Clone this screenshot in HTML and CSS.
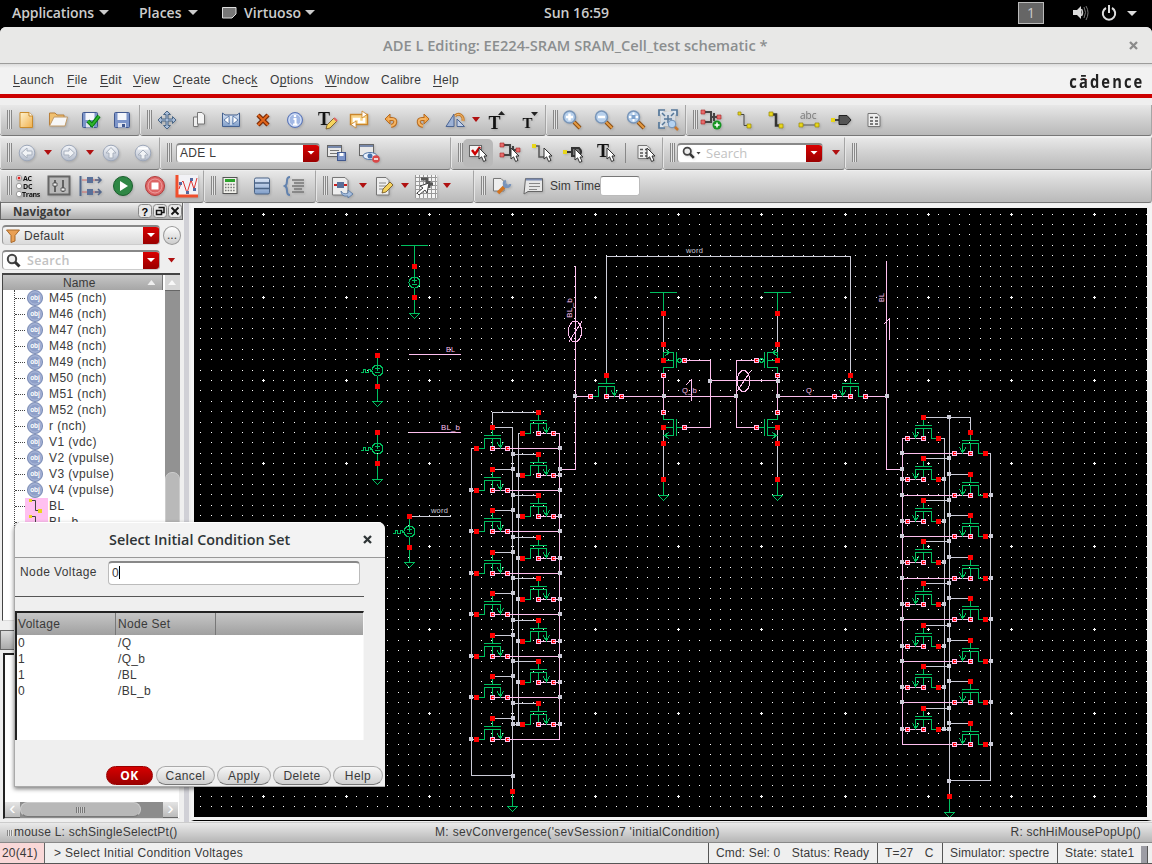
FILE: index.html
```html
<!DOCTYPE html>
<html lang="en">
<head>
<meta charset="utf-8">
<title>ADE L Editing: EE224-SRAM SRAM_Cell_test schematic</title>
<link rel="stylesheet" href="styles.css">
</head>
<body>
<svg class="defs" width="0" height="0">
  <defs>
    <linearGradient id="gr" x1="0" y1="0" x2="0" y2="1"><stop offset="0" stop-color="#f5f7fb"/><stop offset="1" stop-color="#b4bccb"/></linearGradient>
    <linearGradient id="gy" x1="0" y1="0" x2="1" y2="1"><stop offset="0" stop-color="#fff3d0"/><stop offset="1" stop-color="#f0b04c"/></linearGradient>
    <linearGradient id="gb" x1="0" y1="0" x2="0" y2="1"><stop offset="0" stop-color="#dfe9f8"/><stop offset="1" stop-color="#7f9dc8"/></linearGradient>
    <symbol id="cur" viewBox="0 0 10 15" overflow="visible"><path d="M1 0V11L3.600 8.800L5.600 13.500L8 12.400L6 8H9Z" fill="#fff" stroke="#333" stroke-width="1"/></symbol>
    <symbol id="new" viewBox="-16 -12 32 24"><path d="M-6 -7.500H3L6.500 -4V7.500H-6Z" fill="url(#gy)" stroke="#c98b2c"/><path d="M3 -7.500V-4H6.500" fill="#fff" stroke="#c98b2c"/></symbol>
    <symbol id="open" viewBox="-16 -12 32 24"><path d="M-8.500 5V-7H-3L-1 -5H6V-2" fill="#f0c070" stroke="#b9803a"/><path d="M-8.500 6L-4 -3H9.500L7 6Z" fill="#f7f7f7" stroke="#c09a68"/></symbol>
    <symbol id="save" viewBox="-16 -12 32 24"><rect x="-7.500" y="-7.500" width="15" height="15" rx="1" fill="#7d95c9" stroke="#42598f"/><rect x="-4.500" y="-7" width="9" height="7" fill="#f4f6fb"/><rect x="-4" y="3" width="8" height="4.500" fill="#dfe3ee"/><rect x="0" y="4" width="3" height="3" fill="#42598f"/></symbol>
    <symbol id="savec" viewBox="-16 -12 32 24"><use href="#save" x="-16" y="-12" width="32" height="24"/><path d="M-2 1L2 5L9 -4" fill="none" stroke="#087a12" stroke-width="4"/><path d="M-2 1L2 5L9 -4" fill="none" stroke="#2db52c" stroke-width="2"/></symbol>
    <symbol id="move" viewBox="-16 -12 32 24"><path d="M0 -9L3.500 -5.500H1V-1H5.500V-3.500L9 0L5.500 3.500V1H1V5.500H3.500L0 9L-3.500 5.500H-1V1H-5.500V3.500L-9 0L-5.500 -3.500V-1H-1V-5.500H-3.500Z" fill="#a9bdd8" stroke="#4c6887"/></symbol>
    <symbol id="copy" viewBox="-16 -12 32 24"><path d="M-5.500 -3H-1V6.500H-5.500Z" fill="#eee" stroke="#777"/><path d="M-1.500 -7.500H3L5.500 -5V4H-1.500Z" fill="#f4f4f4" stroke="#777"/></symbol>
    <symbol id="str" viewBox="-16 -12 32 24"><path d="M-8.500 -7V6.500H8.500V-7L6 -5H-6Z" fill="url(#gb)" stroke="#44618f"/><path d="M-7 0L-2 -4V4ZM7 0L2 -4V4Z" fill="#fff" stroke="#3b5f95" stroke-width=".7"/><path d="M0 -4V5" stroke="#fff"/></symbol>
    <symbol id="del" viewBox="-16 -12 32 24"><path d="M-5 -5L5 5M5 -5L-5 5" stroke="#7b2a06" stroke-width="4.500"/><path d="M-5 -5L5 5M5 -5L-5 5" stroke="#e2661c" stroke-width="2"/></symbol>
    <symbol id="info" viewBox="-16 -12 32 24"><circle r="7.500" fill="#a2b8e4" stroke="#5a74b5"/><circle r="6" fill="none" stroke="#dce6fa"/><path d="M-1.500 -1H.5V4M-2 4.500H2.500" fill="none" stroke="#fff" stroke-width="2"/><circle cy="-4" r="1.300" fill="#fff"/></symbol>
    <symbol id="tp" viewBox="-16 -12 32 24"><text x="-9" y="5" class="bigt">T</text><path d="M-1 9L0 5L7 -2L10 1L3 8Z" fill="#f5d35e" stroke="#6b4c18" stroke-width=".8"/><path d="M7 -2L10 1" stroke="#d66" stroke-width="2"/></symbol>
    <symbol id="rot" viewBox="-16 -12 32 24"><rect x="-8.500" y="-5.500" width="17" height="10" fill="#f9d489" stroke="#c9852b" stroke-width="1.400"/><path d="M-5 2V-1H0V2H5V-2" fill="none" stroke="#fff" stroke-width="2.500"/><path d="M3 -9L8 -5.500L3 -2ZM-3 8L-8 4.500L-3 1Z" fill="#fff" stroke="#c9852b" stroke-width=".8"/></symbol>
    <symbol id="undo" viewBox="-16 -12 32 24"><path d="M-3 -1H1C6 -1 5 5 0 6" fill="none" stroke="#b66b20" stroke-width="4"/><path d="M-6 -1L-1 -6V4Z" fill="#f2a64b" stroke="#b66b20"/><path d="M-3 -1H1C6 -1 5 5 0 6" fill="none" stroke="#f5b463" stroke-width="2"/></symbol>
    <symbol id="redo" viewBox="-16 -12 32 24"><g transform="scale(-1 1)"><path d="M-3 -1H1C6 -1 5 5 0 6" fill="none" stroke="#b66b20" stroke-width="4"/><path d="M-6 -1L-1 -6V4Z" fill="#f2a64b" stroke="#b66b20"/><path d="M-3 -1H1C6 -1 5 5 0 6" fill="none" stroke="#f5b463" stroke-width="2"/></g></symbol>
    <symbol id="flip" viewBox="-16 -12 32 24"><path d="M-9 6.500H-1V-6Z" fill="#9db2d6" stroke="#4c6593"/><path d="M2 6.500H9.500L2 -1Z" fill="#c2d0e8" stroke="#4c6593"/><path d="M0 -4C4 -8 9 -4 8 1" fill="none" stroke="#c47a28" stroke-width="3"/><path d="M0 -4C4 -8 9 -4 8 1" fill="none" stroke="#f6c07a"/></symbol>
    <symbol id="tu" viewBox="-16 -12 32 24"><text x="-8.500" y="9" class="bigt">T</text><path d="M1 -5H8L4.500 -9Z" fill="#222"/></symbol>
    <symbol id="td" viewBox="-16 -12 32 24"><text x="-6.500" y="8" class="midt">T</text><path d="M2 -8H9L5.500 -4Z" fill="#222"/></symbol>
    <symbol id="mag" viewBox="-16 -12 32 24"><path d="M2 2L8 8" stroke="#8a4d12" stroke-width="4"/><path d="M2 2L8 8" stroke="#e59b44" stroke-width="2"/><circle cx="-2.500" cy="-3" r="6" fill="#b7d0ec" stroke="#7895b8" stroke-width="1.500"/></symbol>
    <symbol id="zin" viewBox="-16 -12 32 24"><use href="#mag" x="-16" y="-12" width="32" height="24"/><path d="M-6 -3H1M-2.500 -6.500V.5" stroke="#fff" stroke-width="2.500"/></symbol>
    <symbol id="zout" viewBox="-16 -12 32 24"><use href="#mag" x="-16" y="-12" width="32" height="24"/><path d="M-6 -3H1" stroke="#fff" stroke-width="2.500"/></symbol>
    <symbol id="zfit" viewBox="-16 -12 32 24"><use href="#mag" x="-16" y="-12" width="32" height="24"/><path d="M-7 -3H2M-2.500 -7.500V1.500" stroke="#fff" stroke-width="2"/><rect x="-4.500" y="-5" width="4" height="4" fill="#7ea2cc"/></symbol>
    <symbol id="zsel" viewBox="-16 -12 32 24"><path d="M-9 -4V-10H-3M3 -10H9V-4M-9 2V8H-3" fill="#dfe8f2" stroke="#557799" stroke-width="1.700"/><rect x="-7" y="-8" width="14" height="14" fill="#dfe8f2" opacity=".7"/><path d="M-6 -7L-3 -4M6 -7L3 -4M-6 5L-3 2M0 -5V3M-4 -1H4" stroke="#557799" stroke-width="1.500"/><path d="M6 6L10 10" stroke="#c8752a" stroke-width="2.500"/><circle cx="4" cy="4" r="3.800" fill="#b5d2f0" stroke="#6d8eb4"/></symbol>
    <symbol id="fet" viewBox="-16 -12 32 24"><path d="M-7 -8H0V2H-7M0 -3H9M3 -7V1" fill="none" stroke="#444" stroke-width="2"/><path d="M-10 -10h4v4h-4zM-10 0h4v4h-4zM6 -5h4v4h-4z" fill="#e66b6b" stroke="#a22" stroke-width=".6"/></symbol>
    <symbol id="addi" viewBox="-16 -12 32 24"><use href="#fet" x="-16" y="-12" width="32" height="24"/><circle cx="6" cy="5" r="4.500" fill="#159522"/><path d="M3.500 5H8.500M6 2.500V7.500" stroke="#fff" stroke-width="1.500"/></symbol>
    <symbol id="wire" viewBox="-16 -12 32 24"><path d="M-4 -5.500H0V5.500H4" fill="none" stroke="#444"/><path d="M-6 -8h3v3h-3zM3 4h4v4h-4z" fill="#e8d61b" stroke="#998b08" stroke-width=".7"/></symbol>
    <symbol id="wwire" viewBox="-16 -12 32 24"><path d="M-4 -5.500H0V5.500H4" fill="none" stroke="#333" stroke-width="2.500"/><path d="M-7 -8h4v4h-4zM3 4h4v4h-4z" fill="#e8d61b" stroke="#998b08" stroke-width=".7"/></symbol>
    <symbol id="abc" viewBox="-16 -12 32 24"><text x="-9" y="-1" class="abct">abc</text><path d="M-8 5H8" stroke="#555"/><path d="M-10 3h4v4h-4zM6 3h4v4h-4z" fill="#e8d61b" stroke="#998b08" stroke-width=".7"/></symbol>
    <symbol id="pin" viewBox="-16 -12 32 24"><path d="M-8 0H-2" stroke="#444" stroke-width="2"/><rect x="-10" y="-2" width="4" height="4" fill="#e8d61b"/><path d="M-2 -4.500H6L10 0L6 4.500H-2Z" fill="#555" stroke="#222"/></symbol>
    <symbol id="form" viewBox="-16 -12 32 24"><path d="M-6 -6.500H3L6 -3.500V6.500H-6Z" fill="#eee" stroke="#777"/><path d="M-4 -2.500H-1M1 -2.500H4M-4 1H-1M1 1H4M-4 4H-1M1 4H4" stroke="#555" stroke-width="1.700"/></symbol>
    <symbol id="left" viewBox="-16 -12 32 24"><circle r="7.800" fill="url(#gr)" stroke="#9ca6b8"/><path d="M-5.500 0L0 -5V-2H5V2H0V5Z" fill="#f1f3f6" stroke="#a8b0bd"/></symbol>
    <symbol id="right" viewBox="-16 -12 32 24"><circle r="7.800" fill="url(#gr)" stroke="#9ca6b8"/><path d="M5.500 0L0 -5V-2H-5V2H0V5Z" fill="#f1f3f6" stroke="#a8b0bd"/></symbol>
    <symbol id="up" viewBox="-16 -12 32 24"><circle r="7.800" fill="url(#gr)" stroke="#9ca6b8"/><path d="M0 -5.500L-5 0H-2V5H2V0H5Z" fill="#f1f3f6" stroke="#a8b0bd"/></symbol>
    <symbol id="top" viewBox="-16 -12 32 24"><circle r="7.800" fill="url(#gr)" stroke="#9ca6b8"/><path d="M-5 -4.500H5" stroke="#fff" stroke-width="2"/><path d="M0 -3L-5 2H-2V6H2V2H5Z" fill="#f1f3f6" stroke="#a8b0bd"/></symbol>
    <symbol id="vsave" viewBox="-16 -12 32 24"><rect x="-9.500" y="-7.500" width="14" height="11" fill="#e8e8e8" stroke="#666"/><path d="M-9 -6H4" stroke="#7788aa" stroke-width="2"/><path d="M-7 -2.500H2M-7 .5H0" stroke="#777"/><rect x="0.500" y="-.5" width="8" height="8" fill="#7d95c9" stroke="#42598f"/><rect x="2.500" y="0" width="4" height="3" fill="#fff"/></symbol>
    <symbol id="veye" viewBox="-16 -12 32 24"><rect x="-9.500" y="-8.500" width="14" height="11" fill="#e8e8e8" stroke="#666"/><path d="M-9 -7H4" stroke="#7788aa" stroke-width="2"/><ellipse cx="1" cy="3" rx="7" ry="3.500" fill="#e8f0fb" stroke="#5478a8"/><circle cx="1" cy="3" r="2.500" fill="#4470ac"/><circle cx="7" cy="6" r="3.800" fill="#d94848"/><path d="M5 6H9" stroke="#fff" stroke-width="1.500"/></symbol>
    <symbol id="selc" viewBox="-16 -12 32 24"><rect x="-8.500" y="-7.500" width="12" height="11" fill="#f4f4f4" stroke="#666"/><path d="M-6 -3L-3 1L2 -6" fill="none" stroke="#c00" stroke-width="2.500"/><use href="#cur" x="0" y="-5" width="10" height="15"/></symbol>
    <symbol id="seli" viewBox="-16 -12 32 24"><use href="#fet" x="-16" y="-12" width="32" height="24"/><use href="#cur" x="0" y="-5" width="10" height="15"/></symbol>
    <symbol id="selw" viewBox="-16 -12 32 24"><path d="M-6 -7H-3V4H2" fill="none" stroke="#555" stroke-width="1.500"/><path d="M-10 -9h4v4h-4z" fill="#e8d61b"/><use href="#cur" x="1" y="-5" width="10" height="15"/></symbol>
    <symbol id="selp" viewBox="-16 -12 32 24"><path d="M-8 -1H-2M-2 -5H5Q9 -1 5 3H-2Z" fill="#777" stroke="#333" stroke-width="2"/><path d="M-11 -3h4v4h-4z" fill="#e8d61b"/><use href="#cur" x="0" y="-4" width="10" height="15"/></symbol>
    <symbol id="selt" viewBox="-16 -12 32 24"><text x="-9" y="4" class="bigt">T</text><use href="#cur" x="0" y="-5" width="10" height="15"/></symbol>
    <symbol id="self" viewBox="-16 -12 32 24"><g transform="translate(-2 -1)"><use href="#form" x="-16" y="-12" width="32" height="24"/></g><use href="#cur" x="0" y="-5" width="10" height="15"/></symbol>
    <symbol id="acdc" viewBox="-16 -12 32 24"><circle cx="-8" cy="-8" r="2.700" fill="#fff" stroke="#999"/><circle cx="-8" cy="-8" r="1.500" fill="#d22"/><circle cx="-8" cy="0" r="2.700" fill="#fff" stroke="#999"/><circle cx="-8" cy="8" r="2.700" fill="#fff" stroke="#999"/><text x="-4" y="-5" class="act">AC</text><text x="-4" y="3" class="act">DC</text><text x="-5" y="11" class="act">Trans</text></symbol>
    <symbol id="sld" viewBox="-16 -12 32 24"><rect x="-10.500" y="-9.500" width="21" height="18" fill="#b9b9b9" stroke="#666" stroke-width="2"/><path d="M-4 -6V6M4 -6V6" stroke="#444" stroke-width="1.500"/><path d="M-6 -3h4v3h-4zM2 2h4v3h-4z" fill="#eee" stroke="#444" stroke-width=".8"/></symbol>
    <symbol id="sigs" viewBox="-16 -12 32 24"><path d="M-10.500 -10V10" stroke="#53688c" stroke-width="2"/><path d="M-9 -6H10M-9 6H10" stroke="#c66" stroke-width="1"/><path d="M-4 -9h6v6h-6zM-4 3h6v6h-6z" fill="#5a7099"/><path d="M4 -6H10M7 -9L10 -6L7 -3M4 6H10M7 3L10 6L7 9" fill="none" stroke="#53688c" stroke-width="1.500"/></symbol>
    <symbol id="run" viewBox="-16 -12 32 24"><circle r="9.500" fill="#2f8745" stroke="#1b5e2e"/><path d="M-3 -5L5 0L-3 5Z" fill="#fff"/></symbol>
    <symbol id="stop" viewBox="-16 -12 32 24"><circle r="9.500" fill="#dd6464" stroke="#b03a3a"/><circle r="7" fill="none" stroke="#eea0a0"/><rect x="-3.500" y="-3.500" width="7" height="7" fill="#fff"/></symbol>
    <symbol id="plot" viewBox="-16 -12 32 24"><rect x="-11" y="-11" width="22" height="22" fill="#f2f2f6"/><path d="M-10 -11V10H11" fill="none" stroke="#f04e2c" stroke-width="3"/><path d="M-8 3L-6 -3L-4 -5L0 7L4 -6L7 3L10 -8" fill="none" stroke="#d33"/><path d="M-8 -4h3v3h-3zM-1 5h3v3h-3zM3 -8h3v3h-3zM6 2h3v3h-3z" fill="#5468a0"/></symbol>
    <symbol id="calc" viewBox="-16 -12 32 24"><rect x="-7" y="-8.500" width="14" height="16" fill="#f0f0ea" stroke="#555"/><rect x="-5" y="-7" width="10" height="3" fill="#2ca32c"/><path d="M-5 -1.500H5M-5 1.500H5M-5 4.500H5" stroke="#777" stroke-width="1.400" stroke-dasharray="1.500 1.200"/></symbol>
    <symbol id="db" viewBox="-16 -12 32 24"><rect x="-7.500" y="-8" width="15" height="16" rx="1.500" fill="url(#gb)" stroke="#4a6385"/><path d="M-7 -3H7M-7 2.500H7" stroke="#4a6385" stroke-width="1.500"/></symbol>
    <symbol id="brace" viewBox="-16 -12 32 24"><path d="M-4 -9Q-7 -9 -7 -5T-9 0Q-7 1 -7 5T-4 9" fill="none" stroke="#6282ae" stroke-width="2"/><path d="M-2 -6H10M0 -3H10M-2 0H10M0 3H8M-2 6H10" stroke="#777" stroke-width="1.500"/></symbol>
    <symbol id="chk" viewBox="-16 -12 32 24"><path d="M-9.500 -8.500H3L6 -5.500V9H-9.500Z" fill="#eee" stroke="#777"/><path d="M-8 -1H5" stroke="#c22" stroke-width="2"/><rect x="-5" y="-4" width="7" height="6" fill="#5a7099"/><path d="M-1 5Q1 9 6 7V4L11 8L6 12V10Q-1 11 -1 5Z" fill="#a6bede" stroke="#55739d" stroke-width=".8"/></symbol>
    <symbol id="pen" viewBox="-16 -12 32 24"><path d="M-7.500 -8.500H2L5 -5.500V9H-7.500Z" fill="#eee" stroke="#777"/><path d="M-5 -3H2M-5 0H2M-5 3H0" stroke="#888"/><path d="M-2 7L-1 3L6 -4L9 -1L2 6Z" fill="#f5d35e" stroke="#6b4c18" stroke-width=".8"/></symbol>
    <symbol id="grid" viewBox="-16 -12 32 24"><rect x="-11" y="-11" width="22" height="23" fill="#f5f5f5"/><path d="M-10.500 -11V12M-6.500 -11V12M-2.500 -11V12M1.500 -11V12M5.500 -11V12M9.500 -11V12M-11 -8.500H11M-11 -4.500H11M-11 -.5H11M-11 3.500H11M-11 7.500H11" stroke="#999" stroke-width="1"/><path d="M-5 -7H1V-2H7M3 -5V2" fill="none" stroke="#555" stroke-width="3"/><path d="M3 -3L1 7L-1 4L-7 9L-9 7L-3 2L-6 0Z" fill="#fff" stroke="#444"/></symbol>
    <symbol id="wr" viewBox="-16 -12 32 24"><path d="M-7.500 -7.500H0L3 -4.500V5H-7.500Z" fill="#eee" stroke="#777"/><path d="M-3 7L4 0" stroke="#d27320" stroke-width="3.500"/><path d="M3 1L6 -2" stroke="#7894bc" stroke-width="3"/><path d="M9 -2A3 3 0 1 1 5 -5" fill="none" stroke="#7894bc" stroke-width="2.500"/></symbol>
    <symbol id="note" viewBox="-16 -12 32 24"><path d="M-7.500 -7.500H9.500V5.500H-5L-9 8Z" fill="#e7e7e7" stroke="#666"/><path d="M-7 -6.500H9" stroke="#7b8bb0" stroke-width="2"/><path d="M-4 -2.500H7M-4 .5H7M-4 3.500H4" stroke="#888"/></symbol>
    <symbol id="obj" viewBox="0 0 16 16"><circle cx="8" cy="8" r="7.600" fill="#8e9fc8" stroke="#7183ae" stroke-width=".8"/><circle cx="8" cy="8" r="6.200" fill="none" stroke="#b6c2de" stroke-width=".8"/><text x="8" y="10.300" text-anchor="middle" class="objt">obj</text></symbol>
    <symbol id="look" viewBox="0 0 16 16"><circle cx="6" cy="6" r="4.200" fill="#eee" stroke="#444" stroke-width="2"/><path d="M9 9L13.500 13.500" stroke="#333" stroke-width="3"/></symbol>
  </defs>
</svg>

<header class="topbar">
  <span class="tb apps">Applications</span><i class="tri"></i>
  <span class="tb places">Places</span><i class="tri"></i>
  <svg class="appicon" width="15" height="12"><path d="M.5 .5H14V7L10 11H.5Z" fill="#777" stroke="#ddd"/></svg>
  <span class="tb virt">Virtuoso</span><i class="tri"></i>
  <span class="clock">Sun 16:59</span>
  <span class="ws">1</span>
  <svg class="tray" width="64" height="18" viewBox="0 0 64 18"><path d="M0 6H4L8 2V15L4 11H0Z" fill="#ddd"/><path d="M8.500 5Q10.500 8.500 8.500 12" fill="none" stroke="#ccc" stroke-width="1.500"/><path d="M11 3Q14 8.500 11 14M13 2Q17 8.500 13 16" fill="none" stroke="#777"/><path d="M33 4A6.200 6.200 0 1 0 39 4" fill="none" stroke="#ddd" stroke-width="2"/><path d="M36 1V9" stroke="#ddd" stroke-width="2"/><path d="M54 7H64L59 12Z" fill="#ddd"/></svg>
</header>

<main class="win">
  <div class="title"><span>ADE L Editing: EE224-SRAM SRAM_Cell_test schematic *</span><svg class="tclose" width="9" height="9"><path d="M1 1L8 8M8 1L1 8" stroke="#8b8b8b" stroke-width="2.300"/></svg></div>
  <nav class="menu">
    <span><u>L</u>aunch</span><span><u>F</u>ile</span><span><u>E</u>dit</span><span><u>V</u>iew</span><span><u>C</u>reate</span><span>Chec<u>k</u></span><span>O<u>p</u>tions</span><span><u>W</u>indow</span><span>Calibre</span><span><u>H</u>elp</span>
    <b class="brand">c<span>ā</span>dence</b>
  </nav>

  <div class="bar r1">
    <section class="seg" id="s11"><i class="grip"></i><svg><use href="#new"/></svg><svg><use href="#open"/></svg><svg><use href="#savec"/></svg><svg><use href="#save"/></svg></section>
    <section class="seg" id="s12"><i class="grip"></i><svg><use href="#move"/></svg><svg><use href="#copy"/></svg><svg><use href="#str"/></svg><svg><use href="#del"/></svg><svg><use href="#info"/></svg><svg><use href="#tp"/></svg><svg><use href="#rot"/></svg><svg><use href="#undo"/></svg><svg><use href="#redo"/></svg><svg><use href="#flip"/></svg><i class="dd"></i><svg><use href="#tu"/></svg><svg><use href="#td"/></svg></section>
    <section class="seg" id="s13"><i class="grip"></i><svg><use href="#zin"/></svg><svg><use href="#zout"/></svg><svg><use href="#zfit"/></svg><svg><use href="#zsel"/></svg></section>
    <section class="seg wide" id="s14"><i class="grip"></i><svg><use href="#addi"/></svg><svg><use href="#wire"/></svg><svg><use href="#wwire"/></svg><svg><use href="#abc"/></svg><svg><use href="#pin"/></svg><svg><use href="#form"/></svg></section>
  </div>
  <div class="bar r2">
    <section class="seg" id="s21"><i class="grip"></i><svg><use href="#left"/></svg><i class="dd"></i><svg><use href="#right"/></svg><i class="dd"></i><svg><use href="#up"/></svg><svg><use href="#top"/></svg></section>
    <section class="seg" id="s22"><i class="grip"></i><div class="combo ade"><span>ADE L</span><b></b></div><svg><use href="#vsave"/></svg><svg><use href="#veye"/></svg></section>
    <section class="seg" id="s23"><i class="grip"></i><div class="pressed"><svg><use href="#selc"/></svg></div><svg><use href="#seli"/></svg><svg><use href="#selw"/></svg><svg><use href="#selp"/></svg><svg><use href="#selt"/></svg><i class="vline"></i><svg><use href="#self"/></svg></section>
    <section class="seg" id="s24"><i class="grip"></i><div class="combo find"><svg class="lk"><use href="#look"/></svg><i class="mini"></i><em>Search</em><b></b></div><i class="dd"></i></section>
    <section class="seg wide" id="s25"><i class="grip"></i></section>
  </div>
  <div class="bar r3">
    <section class="seg" id="s31"><i class="grip"></i><svg><use href="#acdc"/></svg><svg><use href="#sld"/></svg><svg><use href="#sigs"/></svg><svg><use href="#run"/></svg><svg><use href="#stop"/></svg><svg><use href="#plot"/></svg></section>
    <section class="seg" id="s32"><i class="grip"></i><svg><use href="#calc"/></svg><svg><use href="#db"/></svg><svg><use href="#brace"/></svg></section>
    <section class="seg" id="s33"><i class="grip"></i><svg><use href="#chk"/></svg><i class="dd"></i><svg><use href="#pen"/></svg><i class="dd"></i><svg><use href="#grid"/></svg><i class="dd"></i></section>
    <section class="seg wide" id="s34"><i class="grip"></i><svg><use href="#wr"/></svg><svg><use href="#note"/></svg><span class="simt">Sim Time</span><div class="siminput"></div></section>
  </div>

  <div class="work">
    <aside class="side">
      <div class="navh"><b>Navigator</b>
        <svg width="46" height="16" viewBox="0 0 46 16"><g fill="#e8e8e8" stroke="#888"><rect x=".5" y="1.500" width="13" height="13" rx="3"/><rect x="15.500" y="1.500" width="13" height="13" rx="3"/><rect x="30.500" y="1.500" width="13" height="13" rx="3"/></g><text x="3.500" y="12.500" class="qm">?</text><path d="M20.500 4.500H26V9.500H24M18.500 7.500H23.500V11.500H18.500Z" fill="none" stroke="#111" stroke-width="1.500"/><path d="M33.500 4.500L40.500 11.500M40.500 4.500L33.500 11.500" stroke="#111" stroke-width="1.800"/></svg>
      </div>
      <div class="siderow"><div class="combo def"><svg class="fun" width="14" height="14"><path d="M.5 1H13.500L9 6.500V12L5 13.500V6.500Z" fill="#e9a055" stroke="#a8682a"/></svg><span>Default</span><b></b></div><span class="dots">...</span></div>
      <div class="siderow two"><div class="combo sf"><svg class="lk2"><use href="#look"/></svg><em>Search</em><b></b></div><i class="dd"></i></div>
      <div class="tree">
        <div class="treemain">
          <div class="th"><span>Name</span><i></i></div>
          <ul id="rows"></ul>
        </div>
        <div class="vscroll"><i class="sbtn"></i><i class="thumb"></i></div>
      </div>
      <div class="prop"></div>
      <div class="low"><div class="hs"><i class="hb">‹</i><div class="ht"><i></i></div><i class="hb">›</i></div></div>
    </aside>
    <div class="split"></div>
    <div class="canvas"><svg id="sch" width="953" height="609" viewBox="194 208 953 609" shape-rendering="crispEdges"></svg></div>
  </div>

  <div class="mouse"><i></i><span class="ml">mouse L: schSingleSelectPt()</span><span class="mm">M: sevConvergence('sevSession7 'initialCondition)</span><span class="mr">R: schHiMousePopUp()</span></div>
  <footer class="status"><span class="pk">20(41)</span><span class="msg">&gt; Select Initial Condition Voltages</span><span class="st cmd">Cmd: Sel: 0 <q>Status: Ready</q></span><span class="st tmp">T=27 <q>C</q></span><span class="st sim">Simulator: spectre</span><span class="st sta">State: state1</span><i class="blk"></i></footer>
</main>

<div class="dialog">
  <div class="dt"><span>Select Initial Condition Set</span><svg width="9" height="9"><path d="M1 1L8 8M8 1L1 8" stroke="#2e3436" stroke-width="2.300"/></svg></div>
  <div class="nv"><label>Node Voltage</label><div class="inp">0<i></i></div></div>
  <hr>
  <div class="tbl">
    <div class="h"><span>Voltage</span><span>Node Set</span></div>
    <div class="r"><span>0</span><span>/Q</span></div>
    <div class="r"><span>1</span><span>/Q_b</span></div>
    <div class="r"><span>1</span><span>/BL</span></div>
    <div class="r"><span>0</span><span>/BL_b</span></div>
  </div>
  <div class="btns"><button class="ok">OK</button><button class="b2">Cancel</button><button class="b3">Apply</button><button class="b4">Delete</button><button class="b5">Help</button></div>
</div>
<script src="schematic.js"></script>
</body>
</html>
```
FILE: styles.css
```css
* { box-sizing: border-box; }
body { margin: 0; width: 1152px; height: 864px; overflow: hidden; background: #000; font: 12px "Liberation Sans", Arial, sans-serif; letter-spacing: .3px; color: #3a3a3a; position: relative; }
.defs { position: absolute; }
i, em, q { font-style: normal; }
q::before, q::after { content: none; }

.topbar { height: 27px; display: flex; align-items: center; font: 600 14px "Open Sans", "Noto Sans", sans-serif; letter-spacing: 0; color: #ccc; padding: 0 0 2px 12px; white-space: nowrap; }
.tb { flex: none; }
.apps { width: 87px; letter-spacing: -.1px; }
.places { width: 49px; margin-left: 30px; }
.virt { width: 61px; margin-left: 7px; }
.tri { flex: none; width: 10px; height: 5px; background: #ccc; clip-path: polygon(0 0, 100% 0, 50% 100%); }
.appicon { margin-left: 24px; }
.clock { width: 66px; margin-left: 229px; }
.ws { width: 26px; height: 22px; border: 1px solid #bbb; background: #666; line-height: 20px; text-align: center; margin-left: 408px; font-weight: 400; flex: none; }
.tray { margin-left: 29px; flex: none; }

.win { height: 837px; background: #efefef; border-radius: 6px 6px 0 0; overflow: hidden; }
.title { height: 37px; background: #e8e8e7; border-bottom: 1px solid #9c9c9b; display: flex; align-items: center; justify-content: space-between; padding: 0 14px 0 383px; font: 600 14.650px "Open Sans", "Noto Sans", sans-serif; letter-spacing: 0; color: #8b8e8f; }
.menu { height: 34px; background: linear-gradient(#dcdcdc, #f2f2f2 4px); border-bottom: 4px solid #c00; display: grid; grid-template-columns: 54px 33px 33px 40px 49px 48px 55px 56px 52px 634px; padding: 0 0 0 13px; line-height: 33px; position: relative; white-space: nowrap; height: 34px; }
.menu u { text-underline-offset: 2px; }
.menu .brand { position: absolute; right: 8px; top: 0; font: 700 17.500px/34px "Open Sans", sans-serif; letter-spacing: 2.500px; color: #222; transform: scaleX(.84); transform-origin: right; }
.brand span { background: linear-gradient(#e33, #e33) 1px 10px / 8px 1px no-repeat; }

.bar { display: flex; width: 1152px; }
.r1 { height: 39px; padding-top: 7px; }
.r2 { height: 33px; }
.r3 { height: 33px; }
.seg { height: 31px; display: flex; align-items: center; position: relative; background: linear-gradient(#e8e8e8, #d4d4d4 40%, #b9b9b9); border-bottom: 1px solid #777; border-right: 1px solid #a5a5a5; border-radius: 0 0 3px 3px; box-shadow: inset 1px 0 #e6e6e6; }
.r1 .seg { padding-bottom: 1px; }
.r2 .seg, .r3 .seg { height: 33px; border-top: 1px solid #eee; padding-bottom: 2px; }
.seg > svg, .pressed svg { flex: none; width: 32px; height: 24px; overflow: visible; }
.seg svg { filter: drop-shadow(1px 1px 1px rgba(0,0,0,.15)); }
.wide { flex: 1; }
.grip { position: absolute; left: 7px; top: 5px; width: 5px; height: 19px; background: repeating-linear-gradient(90deg, #888 0 1px, #e4e4e4 1px 2px); }
.dd { flex: none; width: 10px; height: 24px; display: flex; align-items: center; justify-content: center; }
.dd::before { content: ""; width: 8px; height: 5px; background: #b01010; clip-path: polygon(0 0, 100% 0, 50% 100%); }
#s11 { width: 140px; padding-left: 10px; }
#s12 { width: 406px; padding-left: 11px; }
#s13 { width: 140px; padding-left: 10px; }
#s14 { padding-left: 9px; }
#s14 > svg { margin-right: .5px; }
#s21 { width: 160px; padding-left: 11px; }
#s22 { width: 291px; padding-left: 16px; }
#s23 { width: 212px; padding-left: 11px; }
#s24 { width: 182px; padding-left: 14px; }
#s31 { width: 204px; padding-left: 11px; }
#s32 { width: 112px; padding-left: 10px; }
#s33 { width: 158px; padding-left: 10px; }
#s34 { padding-left: 11px; }
.pressed { width: 30px; height: 28px; border-radius: 5px; background: #b9b9b9; display: flex; justify-content: center; margin: 0 1px; }
.pressed svg { margin-top: 2px; }
.vline { width: 1px; height: 20px; background: #888; margin: 0 4px 0 3px; }
.combo { height: 20px; background: #fff; border: 1px solid #999; border-top: 2px solid #888; border-color: #888 #aaa #ccc #999; border-radius: 4px; display: flex; align-items: center; overflow: hidden; flex: none; }
.combo b { margin-left: auto; width: 16px; align-self: stretch; background: linear-gradient(#d00, #900); display: flex; align-items: center; justify-content: center; margin-top: -1px; }
.combo b::before { content: ""; width: 8px; height: 4px; background: #fff; clip-path: polygon(0 0, 100% 0, 50% 100%); }
.combo em { color: #c2c2c2; font-weight: 600; font-size: 12.500px; font-family: "Open Sans", sans-serif; }
.ade { width: 144px; padding-left: 3px; margin-right: 1px; letter-spacing: .3px; }
.find { width: 146px; padding-left: 4px; margin-right: 8px; }
.combo.find em { margin-left: 5px; font-weight: 400; font-size: 13px; letter-spacing: 0; }
.lk { width: 14px; height: 14px; }
.mini { width: 5px; height: 3px; background: #444; clip-path: polygon(0 0, 100% 0, 50% 100%); }
.simt { width: 51px; white-space: nowrap; margin-left: 1px; letter-spacing: .1px; }
.siminput { width: 40px; height: 20px; background: #fff; border: 1px solid #bbb; border-top-color: #777; border-radius: 3px; margin-left: -1px; }

.work { display: flex; height: 620px; margin-top: -1px; }
.side { width: 183px; height: 620px; }
.navh { height: 18px; width: 183px; border: 1px solid #666; background: linear-gradient(#eee, #adadad); display: flex; align-items: center; justify-content: space-between; padding-left: 12px; }
.navh b { font: 700 11.500px "Open Sans", sans-serif; letter-spacing: .1px; }
.navh svg { margin-right: -2px; }
.qm { font: 700 11px "Liberation Sans", sans-serif; letter-spacing: 0; }
.siderow { display: flex; align-items: center; padding: 5px 0 0 2px; height: 25px; gap: 3px; }
.two { height: 25px; }
.two .dd { width: 17px; }
.def { width: 158px; background: linear-gradient(#f6f6f6, #dadada); padding-left: 3px; gap: 4px; }
.sf { width: 158px; padding-left: 3px; gap: 5px; }
.lk2 { width: 16px; height: 16px; }
.dots { width: 18px; height: 19px; border: 1px solid #999; border-radius: 50%; background: linear-gradient(#fff, #ccc); text-align: center; line-height: 17px; letter-spacing: 0; }
.tree { margin: 3px 0 0 2px; width: 178px; height: 348px; border: 1px solid #444; border-top-width: 2px; border-right: 0; border-bottom-color: #ddd; background: #fff; display: flex; }
.treemain { width: 160px; height: 345px; overflow: hidden; }
.th { height: 15px; background: linear-gradient(#c6c6c6, #a6a6a6); display: flex; align-items: center; padding-left: 60px; letter-spacing: .1px; border-right: 1px solid #777; }
.th i, .sbtn { background: #eee; width: 8px; height: 5px; clip-path: polygon(50% 0, 100% 100%, 0 100%); }
.th i { margin-left: 52px; }
#rows { list-style: none; margin: 0 0 0 11px; padding: 0; border-left: 1px dotted #444; }
#rows li { height: 16px; display: flex; align-items: center; white-space: nowrap; letter-spacing: .4px; }
#rows li::before { content: ""; width: 10px; border-top: 1px dotted #444; margin-right: 2px; }
#rows svg { width: 16px; height: 16px; margin-right: 6px; }
#rows .net { width: 23px; margin: 0 1px 0 -2px; background: #ffc0f0; }
.vscroll { position: relative; width: 17px; background: linear-gradient(90deg, #fff 2px, #929292 2px); }
.vscroll::before { content: ""; position: absolute; left: 2px; top: 0; width: 15px; height: 15px; background: #d6d6d6; border-bottom: 1px solid #666; }
.sbtn { display: block; margin: 5px 0 0 5px; }
.vscroll .sbtn { position: relative; background: #f8f8f8; }
.thumb { position: absolute; left: 2px; top: 197px; width: 15px; height: 100px; border-radius: 7px 7px 0 0; background: #b9b9b9; border: 1px solid #ccc; }
.prop { margin-top: 9px; height: 20px; border: 1px solid #666; background: linear-gradient(#ddd, #aaa); }
.low { margin: 3px 0 0 3px; width: 177px; height: 166px; border: 2px solid #222; border-right: 1px solid #eee; border-bottom: 1px solid #ddd; background: #fff; display: flex; align-items: flex-end; }
.hs { display: flex; width: 173px; height: 16px; }
.hb { width: 15px; background: linear-gradient(#e4e4e4, #bbb); color: #fff; text-align: center; font-size: 19px; line-height: 11px; border-bottom: 1px solid #666; }
.ht { flex: 1; background: #8c8c8c; }
.ht i { display: flex; width: 121px; height: 15px; border-radius: 8px; border: 1px solid #ccc; border-bottom-color: #777; background: repeating-linear-gradient(90deg, #777 0 1px, #ccc 1px 2px) center / 9px 6px no-repeat #b8b8b8; }
.split { width: 8px; background: linear-gradient(90deg, #efefef 1px, #d0d0d6 1px 6px, #efefef 6px); }
.canvas { width: 961px; height: 617px; margin-top: 2px; border: 3px solid #f4f4f4; border-top-width: 4px; border-right-width: 5px; background: #000; border-bottom: 1px solid #000; }
.canvas svg { display: block; box-shadow: 0 3px #f4f4f4; }
#sch text { font: 8px "Liberation Sans", sans-serif; letter-spacing: .2px; }

.mouse { height: 21px; background: linear-gradient(#eaeaea, #b6b6b6); border-bottom: 1px solid #888; border-top: 1px solid #ccc; display: grid; grid-template-columns: 14px 421px 1fr auto; line-height: 19px; padding-right: 11px; align-items: center; letter-spacing: .22px; }
.mm { letter-spacing: .33px; }
.mouse i { margin-left: 7px; width: 6px; height: 6px; background: repeating-linear-gradient(90deg, #888 0 1px, #e4e4e4 1px 2px); }
.status { height: 21px; display: flex; line-height: 20px; border-bottom: 1px solid #555; white-space: nowrap; letter-spacing: .15px; }
.pk { width: 45px; padding-left: 2px; background: #f9d8d8; border-right: 1px solid #666; }
.msg { width: 663px; padding-left: 9px; letter-spacing: .3px; }
.st { border-left: 1px solid #555; padding-left: 7px; }
.cmd { width: 169px; }
.cmd q { margin-left: 8px; }
.tmp { width: 65px; }
.tmp q { margin-left: 8px; }
.sim { width: 115px; }
.sta { width: 84px; }
.blk { width: 7px; height: 17px; margin-top: 3px; background: #9c9ca4; border-right: 1px solid #555; }

.dialog { position: absolute; left: 14px; top: 522px; width: 371px; height: 265px; background: #efefef; border-radius: 7px 7px 0 0; border-left: 1px solid #aaa; border-bottom: 1px solid #aaa; box-shadow: 0 2px 4px rgba(0,0,0,.5); overflow: hidden; }
.dt { height: 36px; background: #f3f3f3; border-bottom: 1px solid #999; border-top: 1px solid #fff; display: flex; align-items: center; justify-content: space-between; padding: 0 13px 2px 94px; font: 600 14.350px "Open Sans", "Noto Sans", sans-serif; letter-spacing: 0; color: #2e3436; }
.nv { display: flex; align-items: center; height: 30px; padding: 0 0 1px 5px; }
.nv label { width: 88px; letter-spacing: .4px; padding-bottom: 2px; }
.inp { width: 252px; height: 24px; border: 1px solid #bbb; border-top: 2px solid #888; border-radius: 4px; background: #fff; display: flex; align-items: center; padding: 0 0 1px 3px; }
.inp i { width: 1px; height: 13px; background: #000; }
hr { border: 0; height: 1px; background: #555; width: 349px; margin: 8px 0 14px 0; }
.tbl { width: 349px; height: 129px; border-top: 2px solid #222; border-left: 2px solid #222; border-right: 1px solid #f8f8f8; background: #fff; }
.tbl .h { height: 22px; background: linear-gradient(#c6c6c6, #a0a0a0); line-height: 22px; display: flex; }
.tbl .h span { width: 100px; border-right: 1px solid #777; padding-left: 2px; letter-spacing: .3px; }
.tbl .h span:first-child { width: 99px; padding-left: 1px; }
.tbl .r { height: 16px; line-height: 17px; display: flex; }
.tbl .r span { width: 100px; padding-left: 1px; letter-spacing: .3px; }
.btns { display: flex; margin: 26px 0 0 91px; }
.btns button { height: 19px; padding: 0; border: 1px solid #aaa; border-bottom-color: #777; border-radius: 10px; background: linear-gradient(#f6f6f6, #cfcfcf); font: 12px "Liberation Sans", sans-serif; letter-spacing: .4px; color: #3a3a3a; }
.btns .ok { width: 47px; background: linear-gradient(#d60000, #9c0000); color: #fff; font: 700 12px/15px "Open Sans", sans-serif; border-color: #900; }
.b2 { width: 59px; margin-left: 3px; }
.b3 { width: 54px; margin-left: 2px; }
.b4 { width: 58px; margin-left: 2px; }
.b5 { width: 50px; margin-left: 2px; }

.bigt { font: 700 18px "Liberation Serif", serif; letter-spacing: 0; fill: #111; }
.midt { font: 700 15px "Liberation Serif", serif; letter-spacing: 0; fill: #111; }
.abct { font: 10px "Open Sans", sans-serif; letter-spacing: 0; fill: #777; }
.act { font: 700 7px "Open Sans", sans-serif; letter-spacing: -.3px; fill: #111; }
.objt { font: 700 6.500px "Liberation Sans", sans-serif; letter-spacing: 0; fill: #fff; }
```
FILE: schematic.js
```js
// Navigator rows
const names = ['M45 (nch)', 'M46 (nch)', 'M47 (nch)', 'M48 (nch)', 'M49 (nch)', 'M50 (nch)', 'M51 (nch)', 'M52 (nch)', 'r (nch)', 'V1 (vdc)', 'V2 (vpulse)', 'V3 (vpulse)', 'V4 (vpulse)', 'BL', 'BL_b'];
document.getElementById('rows').innerHTML = names.map((n, i) =>
  `<li>${i < 13 ? '<svg><use href="#obj"/></svg>' : '<svg class="net" viewBox="0 0 23 16"><path d="M6 2.500H10.500V12.500H15" fill="none" stroke="#444"/><path d="M4 1h3v3h-3zM13 11h4v4h-4z" fill="#e8d61b"/></svg>'}<span>${n}</span></li>`).join('');

const G = '#00c060', P = '#ffc0f0', W = '#ccccd8';
const f = Math.floor, c = v => f(v) + 0.5;
const lines = { [G]: '', [P]: '', [W]: '' };
let nodes = '', reds = '', pins = '', extra = '';
const ln = (col, ...p) => { for (let i = 0; i < p.length; i += 2) lines[col] += (i ? 'L' : 'M') + c(p[i]) + ' ' + c(p[i + 1]); };
const node = (x, y) => { nodes += `M${f(x) - 2} ${f(y) - 2}h4v4h-4z`; };
const red = (x, y) => { reds += `M${f(x) - 2} ${f(y) - 2}h5v5h-5z`; };
const pin = (x, y) => { pins += `<rect x="${f(x) - 2}" y="${f(y) - 2}" width="5" height="5" fill="${P}"/><rect x="${f(x) - 1}" y="${f(y) - 1}" width="3" height="3" fill="#f00"/><rect x="${f(x)}" y="${f(y)}" width="2" height="1" fill="${P}"/>`; };
const gnd = (x, y) => ln(G, x - 5, y, x + 5, y, x, y + 5, x - 5, y);

// Transistor with the gate on top; s = 1 puts the source on the right
function fet(x, y, s, passGate) {
  ln(G, x, y, x, y + 8); ln(G, x - 8, y + 8, x + 8, y + 8);
  ln(G, x - 16 * s, y + 21, x - 8 * s, y + 21, x - 8 * s, y + 11, x + 8 * s, y + 11, x + 8 * s, y + 21);
  ln(G, x, y + 11, x, y + 21);
  ln(G, x + 5 * s, y + 15, x + 6 * s, y + 18, x + 8 * s, y + 20, x + 9 * s, y + 18, x + 11 * s, y + 15);
  ln(G, x + 7 * s, y + 18, x + 9 * s, y + 18);
  red(x, y); pin(x, y + 21); pin(x + 15.5 * s, y + 21);
  passGate ? pin(x - 15.700 * s, y + 21) : red(x - 15.500 * s, y + 21);
}

// Background grid with a cross on each eighth point
let dots = '';
for (let i = -14; i < 78; i++) for (let j = -8; j < 51; j++) {
  const x = f(346.3 + i * 10.392), y = f(297.3 + j * 10.395);
  if (x < 195 || x > 1146 || y < 209 || y > 816) continue;
  dots += `M${x} ${y}h1v1h-1z`;
  if (i % 8 === 0 && j % 8 === 0) dots += `M${x - 1} ${y}h3v1h-3zM${x} ${y - 1}h1v3h-1z`;
}

// Left bank
for (let i = 0; i < 8; i++) {
  const a = 427.6 + 41.530 * i, b = 412.5 + 41.500 * i;
  fet(492, a, 1); fet(538, b, 1);
  ln(W, 492, a, 512, a); ln(P, 492, a + 21, 559, a + 21); ln(W, 471, a + 21, 476, a + 21);
  ln(P, 538, b + 21, 559, b + 21); ln(W, 518, b + 21, 523, b + 21);
  if (i) { node(513, a); node(513, b); ln(W, 512, b, 538, b); node(471, a + 21); node(518, b + 21); node(560, b + 21); }
  if (i < 7) node(560, a + 21);
}
ln(W, 492, 427, 492, 412, 538, 412);
ln(W, 471, 448, 471, 775, 512, 775);
ln(W, 512, 427, 512, 791); ln(W, 518, 433, 518, 724, 512, 724); node(513, 724); node(513, 776);
ln(P, 559, 433, 559, 739); node(560, 469);
red(512, 791); ln(G, 512, 791, 512, 806); gnd(512, 806);

// Right bank
for (let i = 0; i < 8; i++) {
  const a = 417.4 + 41.530 * i, b = 432.6 + 41.550 * i;
  fet(923, a, -1); fet(970, b, -1);
  ln(W, 923, a, 949, a); ln(P, 902, a + 21, 923, a + 21); ln(W, 938, a + 21, 944, a + 21);
  ln(P, 902, b + 21, 970, b + 21); ln(W, 985, b + 21, 990, b + 21);
  node(949, a);
  if (i) { node(949, b); ln(W, 949, b, 970, b); node(902, a + 21); node(944, a + 21); node(991, b + 21); }
  if (i < 7) node(902, b + 21);
}
ln(W, 949, 417, 970, 417, 970, 432);
ln(P, 902, 438, 902, 744); node(902, 469);
ln(W, 944, 438, 944, 729, 949, 729); node(949, 729);
ln(W, 990, 453, 990, 780, 949, 780); ln(W, 949, 417, 949, 796); node(949, 781);
red(949, 796); ln(G, 949, 796, 949, 812); gnd(949, 812);

// Bit lines, word line and pass gates
ln(P, 575, 266, 575, 469, 560, 469); node(575, 396);
ln(P, 575, 396, 590, 396); fet(606, 375.3, 1, true); ln(P, 606, 396, 736, 396);
ln(W, 606, 375, 606, 256, 850, 256, 850, 375);
fet(850, 375.3, -1, true); ln(P, 777, 396, 850, 396); ln(P, 866, 396, 886, 396);
ln(P, 886, 261, 886, 469, 902, 469); node(887, 396);

// Cross-coupled inverters
function inv(x, s) {
  const X = d => x + d * s;
  ln(G, x - 13, 292, x + 13, 292); ln(G, x, 292, x, 313); ln(W, x, 313, x, 352);
  ln(G, x, 352, X(10), 352, X(10), 367, x, 367, x, 375); ln(G, x, 360, X(10), 360); ln(G, x, 352, x, 360);
  ln(G, X(13), 352, X(13), 367);
  s > 0 ? ln(G, X(2), 349, X(6), 352, X(2), 355) : ln(G, X(1), 349, X(5), 352, X(1), 355);
  ln(G, X(14), 360, X(15), 358, X(17), 358, X(18), 360, X(17), 362, X(15), 362, X(14), 360);
  ln(P, x, 375, x, 412); ln(G, x, 412, x, 419, X(10), 419, X(10), 435, x, 435);
  ln(G, x, 427, X(10), 427); ln(G, X(13), 419, X(13), 435); ln(G, X(13), 427, X(21), 427);
  ln(G, X(5), 432, X(1), 435, X(5), 438); ln(W, x, 427, x, 479); ln(G, x, 479, x, 495); gnd(x, 495);
  [313, 344, 360, 427, 443, 479].forEach(y => red(x, y));
  pin(x, 375); pin(x, 412); pin(X(21), 360); pin(X(21), 427); node(x + 1, 396);
  ln(P, X(21), 360, s > 0 ? 710 : 736, 360, s > 0 ? 710 : 736, 427, X(21), 427);
}
inv(663, 1); inv(777, -1);
ln(P, 710, 380, 777, 380); node(710, 381); node(778, 381); node(736, 396);

// Stimulus sources
function src(x, y, y1, y2, g, pulse) {
  ln(G, x, y1, x, y - 6); ln(G, x, y + 6, x, g); gnd(x, g); red(x, y1); red(x, y2);
  extra += `<circle cx="${x + .5}" cy="${y + .5}" r="5.500" fill="none" stroke="${G}"/>`;
  ln(G, x, y - 4, x, y); ln(G, x - 2, y - 2, x + 2, y - 2); ln(G, x - 2, y + 2, x + 2, y + 2);
  if (pulse) ln(G, x - 16, y + 2, x - 14, y + 2, x - 14, y - 1, x - 12, y - 1, x - 12, y + 2, x - 9, y + 2, x - 9, y - 1, x - 7, y - 1, x - 7, y + 1, x - 5, y + 1);
}
ln(G, 401, 245, 427, 245); ln(G, 414, 245, 414, 266);
src(414, 282, 266, 297, 313); src(377, 370, 355, 386, 401, 1); src(377, 448, 432, 463, 479, 1); src(409, 531, 516, 547, 562, 1);
ln(P, 409, 354, 460, 354); ln(P, 409, 432, 460, 432); ln(W, 409, 516, 450, 516);

const ell = (x, y) => `<ellipse cx="${x}" cy="${y}" rx="6.500" ry="10.500" fill="none" stroke="${P}"/><path d="M${x - 6} ${y + 10}L${x + 7} ${y - 10}" stroke="${P}"/>`;
extra += ell(575, 331.5) + ell(743.5, 381);
ln(P, 691, 379, 691, 400); ln(P, 686, 384, 691, 379); ln(P, 884, 323, 889, 318, 889, 339);
const t = (x, y, s, col, w, r) => `<text x="${x}" y="${y}" fill="${col}" textLength="${w}" lengthAdjust="spacingAndGlyphs"${r ? ` transform="rotate(-90 ${x} ${y})"` : ''}>${s}</text>`;
extra += t(446, 352, 'BL', P, 9) + t(441, 430, 'BL_b', P, 19) + t(431, 513, 'word', W, 17) + t(686, 253, 'word', W, 17)
  + t(682, 393, 'Q_b', P, 15) + t(806, 393, 'Q', P, 6) + t(572, 318, 'BL_b', P, 20, 1) + t(884, 302, 'BL', P, 9, 1);

document.getElementById('sch').innerHTML =
  `<path d="${dots}" fill="#fff"/>` +
  [W, P, G].map(k => `<path d="${lines[k]}" fill="none" stroke="${k}" stroke-linecap="square"/>`).join('') +
  `<path d="${nodes}" fill="${W}"/><path d="${reds}" fill="#f00"/>` + pins + extra;
```
